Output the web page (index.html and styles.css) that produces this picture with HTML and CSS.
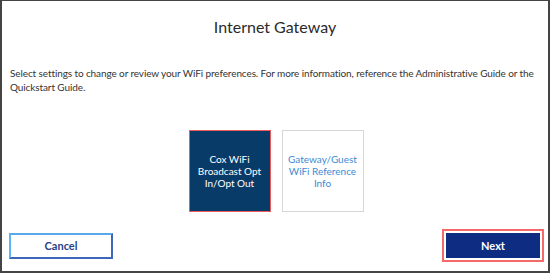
FILE: index.html
```html
<!DOCTYPE html>
<html lang="en">
<head>
    <meta charset="UTF-8">
    <meta name="viewport" content="width=device-width, initial-scale=1.0">
    <title>Internet Gateway</title>
    <link rel="stylesheet" href="styles.css">
</head>
<body>
    <div class="frame">
        <h1>Internet Gateway</h1>
        <p class="intro">Select settings to change or review your WiFi preferences. For more information, reference the Administrative Guide or the Quickstart Guide.</p>
        <div class="tiles">
            <div class="tile selected">Cox WiFi Broadcast Opt In/Opt Out</div>
            <div class="tile">Gateway/Guest WiFi Reference Info</div>
        </div>
        <div class="actions">
            <button class="btn cancel">Cancel</button>
            <div class="next-wrap"><button class="btn next">Next</button></div>
        </div>
    </div>
</body>
</html>
```

FILE: styles.css
```css
html, body {
    margin: 0;
    padding: 0;
}
body {
    font-family: Lato, Arial, sans-serif;
    color: #333;
    background: #fff;
}
.frame {
    width: 550px;
    height: 273px;
    box-sizing: border-box;
    border: 1px solid #444;
    border-width: 1px 2px 2px 2px;
    display: flex;
    flex-direction: column;
}
h1 {
    margin: 15px 0 0;
    text-align: center;
    font-weight: normal;
    font-size: 16px;
    line-height: 22px;
    color: #2b2b2b;
}
.intro {
    margin: 28px 2px 0 8px;
    font-size: 10px;
    letter-spacing: -0.1px;
    line-height: 14px;
    color: #333;
}
.tiles {
    display: flex;
    justify-content: center;
    gap: 11px;
    margin-top: 36px;
}
.tile {
    width: 82px;
    height: 82px;
    box-sizing: border-box;
    border: 1px solid #d6d6d6;
    display: flex;
    align-items: center;
    justify-content: center;
    text-align: center;
    font-size: 10px;
    line-height: 12px;
    color: #3d8ad3;
    padding: 0 5px;
}
.tile.selected {
    background: #093b68;
    color: #fff;
    border: 1px solid #ef5a5a;
    margin-left: 2px;
}
.actions {
    display: flex;
    justify-content: space-between;
    align-items: center;
    margin-top: 17px;
    padding: 0 4px 0 7px;
}
.btn {
    font-family: Lato, Arial, sans-serif;
    font-weight: bold;
    font-size: 11px;
    cursor: pointer;
}
.cancel {
    width: 104px;
    height: 26px;
    background: #fff;
    color: #2a3f86;
    border: 2px solid #3f66b8;
    border-left-color: #5ab6f2;
    border-top-color: #58a8ea;
}
.next-wrap {
    border: 2px solid #f46a6a;
    padding: 2px;
}
.next {
    width: 94px;
    height: 25px;
    border: none;
    background: #0d2c82;
    color: #fff;
    display: block;
}
```
